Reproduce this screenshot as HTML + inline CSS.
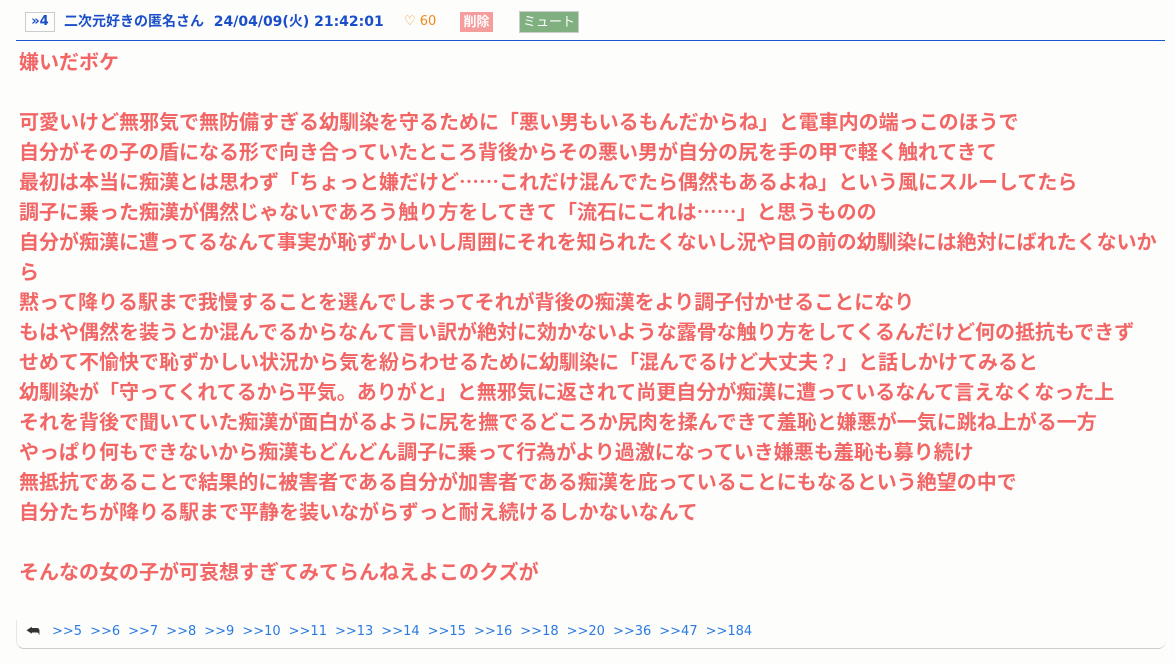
<!DOCTYPE html>
<html><head><meta charset="utf-8">
<style>
body{margin:0;background:#fdfdfc;width:1175px;height:663px;overflow:hidden;font-family:"Liberation Sans","Noto Sans CJK JP",sans-serif;}
.hd{position:absolute;left:16px;top:0;width:1149px;height:40px;border-bottom:1px solid #1a55d0;}
.hd span{position:absolute;top:12px;font-size:13px;line-height:18px;white-space:nowrap}
.num{left:9px;top:12px!important;width:30px;height:20px;border:1px solid #ccc;box-sizing:border-box;color:#1a4fc9;font-weight:bold;text-align:center;line-height:18px!important;font-size:13px!important;font-family:"DejaVu Sans",sans-serif}
.name{left:48px;color:#1a4fc9;font-weight:bold;font-family:"DejaVu Sans","Noto Sans CJK JP",sans-serif;font-size:14px!important;top:13px!important}
.fav{left:388px;color:#f08a1a;font-family:"DejaVu Sans",sans-serif;top:13px!important}
.del{left:444px;top:12px!important;width:33px;height:20px;background:#f59c9c;color:#fff;font-size:13px!important;text-align:center;line-height:20px!important;font-weight:bold}
.mute{left:503px;top:11px!important;width:58px;height:20px;background:#80b080;color:#fff;border:1px solid #ccc;font-size:13px!important;text-align:center;line-height:20px!important}
.body{position:absolute;left:19px;top:46px;font-size:20px;line-height:30px;color:#f26666;font-weight:bold;white-space:nowrap;font-family:"Noto Sans CJK JP","Liberation Sans",sans-serif}
.ft{position:absolute;left:16px;top:620px;width:1149px;height:28px;border-bottom:1px solid #ccc;border-left:1px solid #e8e8e8;border-radius:0 0 8px 8px;font-size:13px;color:#2a7ae2;font-family:"DejaVu Sans",sans-serif}
.ft a{color:#2a7ae2;text-decoration:none;margin-right:8px}
</style></head><body>
<div class="hd">
<span class="num">»4</span>
<span class="name">二次元好きの匿名さん&nbsp; 24/04/09(火) 21:42:01</span>
<span class="fav">♡ 60</span>
<span class="del">削除</span>
<span class="mute">ミュート</span>
</div>
<div class="body">嫌いだボケ<br><br>可愛いけど無邪気で無防備すぎる幼馴染を守るために「悪い男もいるもんだからね」と電車内の端っこのほうで<br>自分がその子の盾になる形で向き合っていたところ背後からその悪い男が自分の尻を手の甲で軽く触れてきて<br>最初は本当に痴漢とは思わず「ちょっと嫌だけど……これだけ混んでたら偶然もあるよね」という風にスルーしてたら<br>調子に乗った痴漢が偶然じゃないであろう触り方をしてきて「流石にこれは……」と思うものの<br>自分が痴漢に遭ってるなんて事実が恥ずかしいし周囲にそれを知られたくないし況や目の前の幼馴染には絶対にばれたくないか<br>ら<br>黙って降りる駅まで我慢することを選んでしまってそれが背後の痴漢をより調子付かせることになり<br>もはや偶然を装うとか混んでるからなんて言い訳が絶対に効かないような露骨な触り方をしてくるんだけど何の抵抗もできず<br>せめて不愉快で恥ずかしい状況から気を紛らわせるために幼馴染に「混んでるけど大丈夫？」と話しかけてみると<br>幼馴染が「守ってくれてるから平気。ありがと」と無邪気に返されて尚更自分が痴漢に遭っているなんて言えなくなった上<br>それを背後で聞いていた痴漢が面白がるように尻を撫でるどころか尻肉を揉んできて羞恥と嫌悪が一気に跳ね上がる一方<br>やっぱり何もできないから痴漢もどんどん調子に乗って行為がより過激になっていき嫌悪も羞恥も募り続け<br>無抵抗であることで結果的に被害者である自分が加害者である痴漢を庇っていることにもなるという絶望の中で<br>自分たちが降りる駅まで平静を装いながらずっと耐え続けるしかないなんて<br><br>そんなの女の子が可哀想すぎてみてらんねえよこのクズが</div>
<div class="ft"><span style="position:absolute;left:9px;top:2px;color:#333;font-size:15px">⮪</span><div style="position:absolute;left:35px;top:4px;white-space:nowrap"><a>&gt;&gt;5</a><a>&gt;&gt;6</a><a>&gt;&gt;7</a><a>&gt;&gt;8</a><a>&gt;&gt;9</a><a>&gt;&gt;10</a><a>&gt;&gt;11</a><a>&gt;&gt;13</a><a>&gt;&gt;14</a><a>&gt;&gt;15</a><a>&gt;&gt;16</a><a>&gt;&gt;18</a><a>&gt;&gt;20</a><a>&gt;&gt;36</a><a>&gt;&gt;47</a><a>&gt;&gt;184</a></div></div>
</body></html>
